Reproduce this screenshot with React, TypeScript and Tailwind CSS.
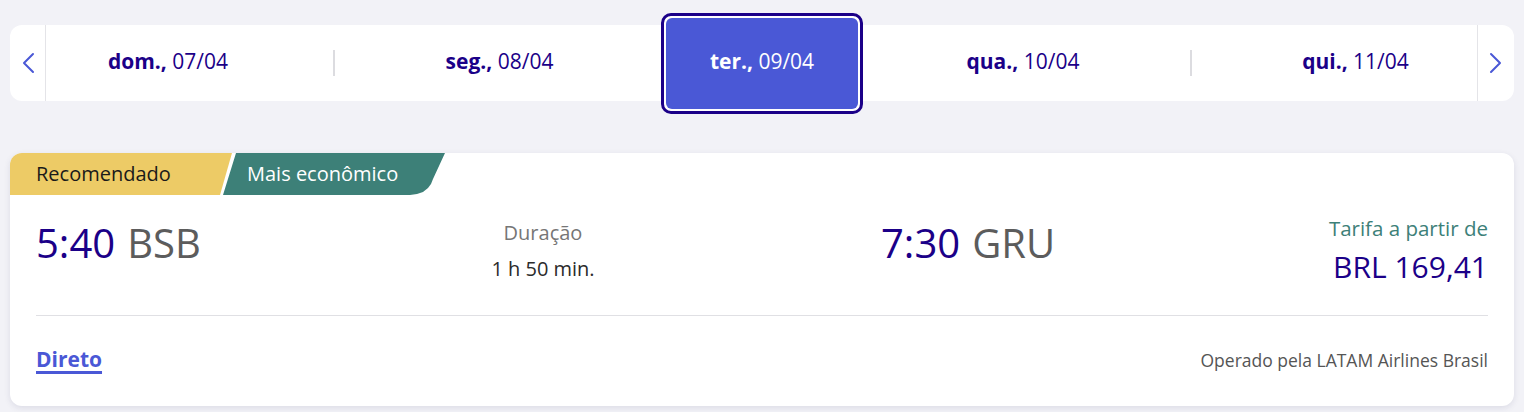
import type { ReactNode } from "react";

type DateItem = {
  day: string;
  date: string;
  selected?: boolean;
  className: string;
};

const dates: DateItem[] = [
  { day: "dom.,", date: "07/04", className: "w-[287px] pr-[43px]" },
  { day: "seg.,", date: "08/04", className: "w-[326px] pl-[3px]" },
  { day: "ter.,", date: "09/04", selected: true, className: "w-[202px]" },
  { day: "qua.,", date: "10/04", className: "w-[327px] pr-[7px]" },
  { day: "qui.,", date: "11/04", className: "w-[285px] pl-[42px]" },
];

const font = { fontFamily: '"Open Sans", "Noto Sans", sans-serif' };

function Chevron({ dir }: { dir: "left" | "right" }) {
  return (
    <svg width="16" height="22" viewBox="0 0 16 22" fill="none" aria-hidden>
      <path
        d={dir === "left" ? "M13 2 L4 11 L13 20" : "M3 2 L12 11 L3 20"}
        stroke="#4a58d6"
        strokeWidth="2"
        strokeLinecap="round"
        strokeLinejoin="round"
      />
    </svg>
  );
}

function DateLabel({ day, date, light }: { day: string; date: string; light?: boolean }) {
  return (
    <span className={`pb-[3px] text-[21px] ${light ? "text-white" : "text-[#1b0088]"}`}>
      <span className="font-bold">{day}</span> {date}
    </span>
  );
}

function Divider() {
  return <div className="h-[26px] w-[2px] shrink-0 self-center bg-[#dcdce0]" />;
}

function DateBar() {
  const items: ReactNode[] = [];
  dates.forEach((d, i) => {
    if (d.selected) {
      items.push(
        <div
          key={d.date}
          className={`${d.className} h-[101px] shrink-0 self-center rounded-[10px] border-[3px] border-[#1b0088] bg-white p-[2px]`}
        >
          <div className="flex h-full items-center justify-center rounded-[6px] bg-[#4a58d6]">
            <DateLabel day={d.day} date={d.date} light />
          </div>
        </div>
      );
    } else {
      items.push(
        <div key={d.date} className={`${d.className} flex shrink-0 items-center justify-center`}>
          <DateLabel day={d.day} date={d.date} />
        </div>
      );
    }
    const next = dates[i + 1];
    if (next && !d.selected && !next.selected) {
      items.push(<Divider key={`div-${i}`} />);
    }
  });

  return (
    <div className="mx-[10px] mt-[25px] flex h-[76px] rounded-xl bg-white">
      <button type="button" className="flex w-[36px] shrink-0 items-center justify-center border-r border-[#e4e4e8]">
        <Chevron dir="left" />
      </button>
      <div className="flex flex-1 items-stretch">{items}</div>
      <button type="button" className="flex w-[37px] shrink-0 items-center justify-center border-l border-[#e4e4e8]">
        <Chevron dir="right" />
      </button>
    </div>
  );
}

function Badges() {
  return (
    <div className="flex h-[42px]">
      <div className="flex h-full w-[222px] items-center rounded-tl-xl bg-[#edcb66] pl-[26px] [clip-path:polygon(0_0,100%_0,calc(100%-12px)_100%,0_100%)]">
        <span className="text-[20px] text-[#1a1a1a]">Recomendado</span>
      </div>
      <div className="-ml-[9px] flex h-full w-[222px] items-center bg-[#3d8078] pl-[24px] [clip-path:polygon(13px_0,222px_0,210px_26px,208px_31px,205px_35px,200px_39px,194px_41px,187px_42px,0_42px)]">
        <span className="text-[20px] text-white">Mais econômico</span>
      </div>
    </div>
  );
}

function FlightCard() {
  return (
    <div className="mx-[10px] mt-[52px] rounded-xl bg-white shadow-[0_2px_6px_rgba(30,30,80,0.1)]">
      <Badges />
      <div className="px-[26px]">
        <div className="flex h-[104px] items-start pt-[28px]">
          <div className="w-[420px] shrink-0 leading-none">
            <span className="text-[40px] text-[#1b0088]">5:40</span>
            <span className="ml-[12px] text-[40px] text-[#5c5c5c]">BSB</span>
          </div>
          <div className="-mt-[3px] flex w-[174px] shrink-0 flex-col items-center">
            <span className="text-[20px] leading-[26px] text-[#767676]">Duração</span>
            <span className="mt-[10px] text-[20px] leading-[26px] text-[#2b2b2b]">1 h 50 min.</span>
          </div>
          <div className="ml-[251px] flex-1 leading-none">
            <span className="text-[40px] text-[#1b0088]">7:30</span>
            <span className="ml-[12px] text-[40px] text-[#5c5c5c]">GRU</span>
          </div>
          <div className="-mt-[8px] flex flex-col items-end">
            <span className="text-[20.5px] leading-[26px] text-[#3d8078]">Tarifa a partir de</span>
            <span className="mt-[8px] text-[30px] leading-[36px] text-[#1b0088]">BRL 169,41</span>
          </div>
        </div>
        <div className="mt-[16px] h-px bg-[#e0e0e4]" />
        <div className="flex h-[90px] items-start justify-between pt-[28px]">
          <a href="#" className="text-[21px] font-bold leading-[30px] text-[#4a58d6] underline decoration-[3px] underline-offset-[4px]">
            Direto
          </a>
          <span className="pt-[5px] text-[17.5px] leading-[22px] text-[#555555]">
            Operado pela LATAM Airlines Brasil
          </span>
        </div>
      </div>
    </div>
  );
}

export default function App() {
  return (
    <div className="h-[412px] overflow-hidden bg-[#f2f2f7]" style={font}>
      <DateBar />
      <FlightCard />
    </div>
  );
}
